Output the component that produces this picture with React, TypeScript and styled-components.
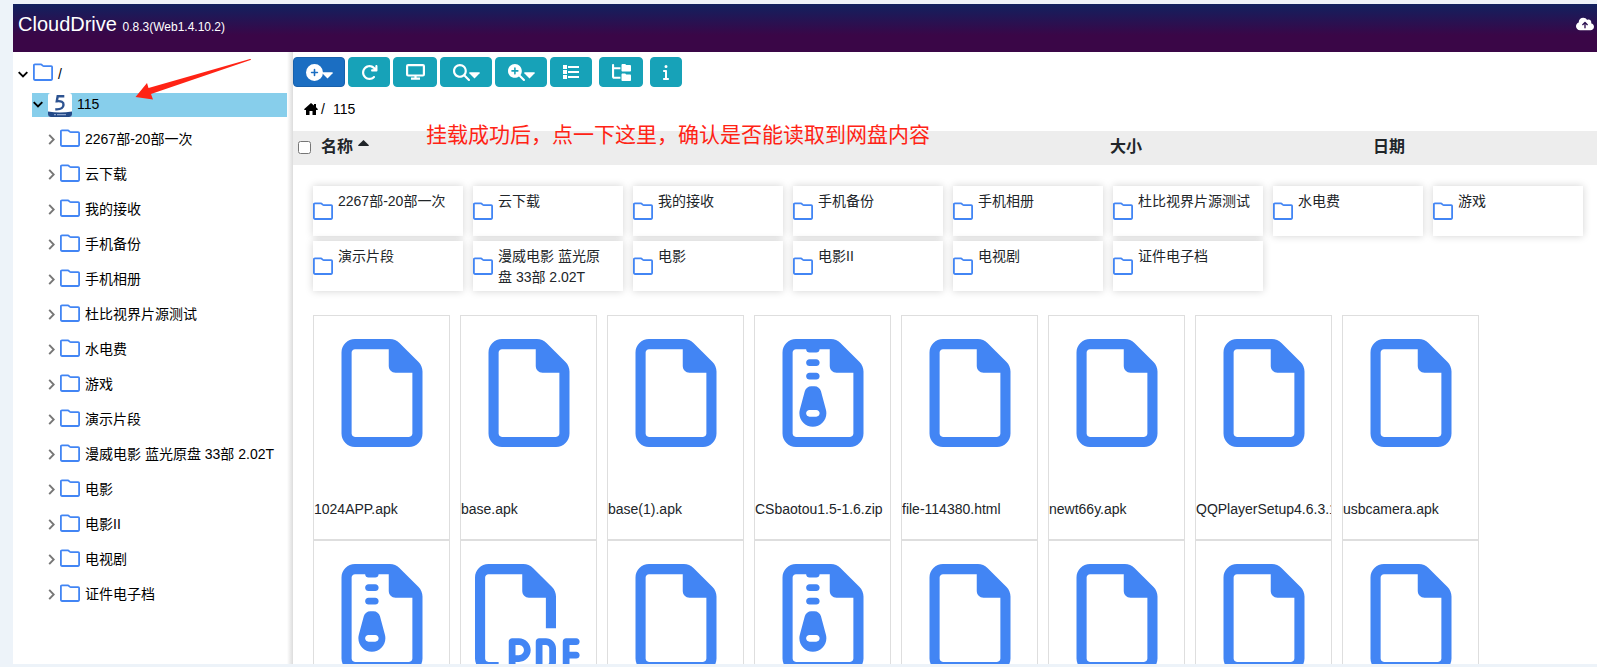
import React from "react";
import styled, { createGlobalStyle, css } from "styled-components";
import {
  FaArrowRotateRight,
  FaCirclePlus,
  FaCloudArrowUp,
  FaFolderTree,
  FaInfo,
  FaMagnifyingGlass,
  FaMagnifyingGlassPlus,
  FaRegFile,
  FaRegFilePdf,
  FaRegFileZipper,
} from "react-icons/fa6";

const GlobalStyle = createGlobalStyle`
  *, *::before, *::after { box-sizing: border-box; }
  body {
    margin: 0;
    background: #edf3f9;
    color: #212529;
    font-family: "Liberation Sans", "Noto Sans CJK SC", sans-serif;
    font-size: 14px;
    line-height: 21px;
  }
  button { font: inherit; color: inherit; cursor: pointer; }
  svg { display: block; flex: none; }
`;

const Page = styled.div`
  position: relative;
  display: flex;
  flex-direction: column;
  height: 100vh;
  padding: 4px 0 3px 13px;
  overflow: hidden;
`;

const Header = styled.header`
  display: flex;
  flex: none;
  align-items: flex-start;
  justify-content: space-between;
  height: 48px;
  padding: 8px 3px 0 5px;
  color: #fff;
  background: linear-gradient(180deg, #11215f 0%, #3a0647 65%);
`;

const Brand = styled.h1`
  margin: 0;
  font-size: 20px;
  font-weight: 400;
  line-height: 24px;

  small { font-size: 12px; }
`;

const IconButton = styled.button`
  display: flex;
  padding: 3px 0;
  border: 0;
  background: none;
`;

const Body = styled.div`
  display: flex;
  flex: 1;
  min-height: 0;
  background: #fff;
`;

const Sidebar = styled.nav`
  flex: none;
  width: 274px;
  padding: 8px 0;
  color: #000;
`;

const Splitter = styled.div`
  flex: none;
  width: 6px;
  background: linear-gradient(90deg, #fff, #dcdcdc);
`;

const indent = [0, 19, 15];

const TreeList = styled.ul<{ $level: number }>`
  margin: 0;
  padding: 0 0 0 ${(p) => indent[p.$level]}px;
  list-style: none;
`;

const TreeRow = styled.button<{ $kind: "root" | "drive" | "folder" }>`
  display: flex;
  align-items: center;
  width: 100%;
  padding: 0;
  border: 0;
  background: none;
  text-align: left;
  white-space: nowrap;
  gap: 5px;
  ${(p) =>
    p.$kind === "root" &&
    css`
      height: 28px;
      margin-bottom: 5px;
      padding-left: 5px;
    `}
  ${(p) =>
    p.$kind === "drive" &&
    css`
      height: 24px;
      margin-bottom: 5px;
      padding: 0 0 2px 1px;
      background: skyblue;

      svg + svg { margin-top: 2px; }
    `}
  ${(p) =>
    p.$kind === "folder" &&
    css`
      height: 35px;
    `}
`;

const TreeIcon = styled.span`
  padding-bottom: 4px;
`;

const Content = styled.main`
  flex: 1;
  min-width: 0;
  overflow: hidden;
`;

const Toolbar = styled.div`
  display: flex;
  gap: 7px;
  padding-top: 5px;
`;

const ToolGroup = styled.div`
  display: flex;
  gap: 3px;
`;

const ToolButton = styled.button<{ $primary?: boolean; $width: number }>`
  display: flex;
  align-items: center;
  justify-content: center;
  width: ${(p) => p.$width}px;
  height: 30px;
  padding: 0;
  border: 1px solid ${(p) => (p.$primary ? "#1861ac" : "#17a2b8")};
  border-radius: 4px;
  color: #fff;
  background: ${(p) => (p.$primary ? "#1b6ec2" : "#17a2b8")};
`;

const DropMark = styled.span`
  margin: 6px 0 0 -1px;
`;

const Breadcrumb = styled.nav`
  display: flex;
  align-items: center;
  gap: 3px;
  height: 44px;
  padding-left: 11px;
  color: #000;

  a { display: flex; color: inherit; text-decoration: none; }
  a:last-child { margin-left: 5px; }
`;

const ListHead = styled.div`
  display: grid;
  grid-template-columns: 817fr 263fr 224fr;
  align-items: center;
  height: 34px;
  padding-bottom: 2px;
  background: #ededed;
`;

const HeadCell = styled.div`
  display: flex;
  align-items: center;
`;

const CheckBox = styled.input`
  width: 13px;
  height: 13px;
  margin: 0 10px 0 5px;
`;

const SortButton = styled.button`
  display: flex;
  gap: 5px;
  padding: 0;
  border: 0;
  background: none;
  font-size: 16px;
  font-weight: 700;
  line-height: 24px;

  svg { margin-top: 5px; }
`;

const FolderGrid = styled.div`
  display: flex;
  flex-wrap: wrap;
  gap: 5px 10px;
  padding: 21px 0 0 20px;
`;

const FolderCard = styled.button`
  display: flex;
  align-items: center;
  gap: 5px;
  width: 150px;
  height: 50px;
  padding: 0 10px 0 0;
  border: 0;
  background: #fff;
  box-shadow: 0 0 8px rgba(0, 0, 0, 0.18);
  text-align: left;

  span { align-self: flex-start; padding-top: 5px; }
`;

const FileGrid = styled.div`
  display: flex;
  flex-wrap: wrap;
  column-gap: 10px;
  padding: 24px 0 0 20px;
`;

const FileCard = styled.figure`
  display: flex;
  flex-direction: column;
  width: 137px;
  height: 225px;
  margin: 0;
  padding-top: 23px;
  border: 1px solid #dedede;
  overflow: hidden;
`;

const FileArt = styled.div`
  display: flex;
  justify-content: center;
  height: 160px;
  color: #4285f4;

  svg { width: auto; height: 108px; }
`;

const FileName = styled.figcaption`
  overflow: hidden;
  white-space: nowrap;
`;

const Note = styled.p`
  position: absolute;
  top: 119px;
  left: 426px;
  margin: 0;
  color: #ff2315;
  font-family: "Noto Sans CJK SC", sans-serif;
  font-size: 21px;
  line-height: 28px;
  white-space: nowrap;
`;

const Arrow = styled.svg`
  position: absolute;
  top: 58px;
  left: 135px;
  pointer-events: none;
`;

const FolderIcon = () => (
  <svg width="20" height="18" viewBox="0 0 20 18" fill="none" stroke="#4285f4" strokeWidth="1.8" strokeLinejoin="round" aria-hidden="true">
    <path d="M1.9 1.4H7.800Q8.600 1.400 9.200 2.200T10.800 3.200H18.200q.9 0 .9.900V16.100q0 .9-.9.900H1.900q-1 0-1-.9V2.300q0-.9 1-.9Z" />
  </svg>
);

const ChevronDown = () => (
  <svg width="10" height="11" viewBox="0 0 10 11" fill="none" stroke="#000" strokeWidth="1.9" aria-hidden="true">
    <path d="m.7 3.200 4.300 4.300 4.300-4.300" />
  </svg>
);

const ChevronRight = () => (
  <svg width="8" height="11" viewBox="0 0 8 11" fill="none" stroke="#777" strokeWidth="1.9" aria-hidden="true">
    <path d="m2.200.8 4.500 4.700-4.500 4.700" />
  </svg>
);

const Triangle = ({ up = false }: { up?: boolean }) => (
  <svg width="11" height="7" viewBox="0 0 11 7" fill="currentColor" aria-hidden="true">
    <path d={up ? "M5.500 0 10.700 5q.6 1-.5 1H.8q-1.100 0-.5-1Z" : "M5.500 6.500.3 1.200Q-.3.300.8.300h9.400q1.100 0 .5.900Z"} />
  </svg>
);

const Drop = () => (
  <DropMark>
    <Triangle />
  </DropMark>
);

const DriveLogo = () => (
  <svg width="24" height="24" viewBox="0 0 24 24" aria-hidden="true">
    <rect width="24" height="24" rx="3" fill="#fff" />
    <path d="M0 18.500q12 2 24 0V21a3 3 0 0 1-3 3H3a3 3 0 0 1-3-3Z" fill="#234a88" />
    <path d="M6 21.700h2M9 21.700h9" stroke="#8ba4cc" strokeWidth="1.2" />
    <path d="M16.300 3.200H9.700L8.800 8.200C13 7.700 15.800 9 15.500 12 15.200 15.300 12 16.600 7.300 16.300" fill="none" stroke="#2d5391" strokeWidth="2.4" />
  </svg>
);

const MonitorIcon = () => (
  <svg width="19" height="16" viewBox="0 0 19 16" fill="none" stroke="currentColor" strokeWidth="2.2" aria-hidden="true">
    <rect x="1.1" y="1.1" width="16.8" height="10.4" rx="1" />
    <path d="M9.500 11.500V15M5 14.700h9" />
  </svg>
);

const ListIcon = () => (
  <svg width="16" height="14" viewBox="0 0 16 14" fill="currentColor" aria-hidden="true">
    <path d="M0 0h4v4H0zM0 5h4v4H0zM0 10h4v4H0zM5 1h11v2H5zM5 6h11v2H5zM5 11h11v2H5z" />
  </svg>
);

const HomeIcon = () => (
  <svg width="14" height="12" viewBox="0 0 14 12" fill="currentColor" aria-hidden="true">
    <path d="M7 0 10 2.500V1h2v3.300l2 1.900-.7.800H12v5H8.500V8h-3v4H2V7H.7L0 6.200Z" />
  </svg>
);

const folders = [
  "2267部-20部一次",
  "云下载",
  "我的接收",
  "手机备份",
  "手机相册",
  "杜比视界片源测试",
  "水电费",
  "游戏",
  "演示片段",
  "漫威电影 蓝光原盘 33部 2.02T",
  "电影",
  "电影II",
  "电视剧",
  "证件电子档",
];

type FileKind = "file" | "zip" | "pdf";

const fileIcons = { file: FaRegFile, zip: FaRegFileZipper, pdf: FaRegFilePdf };

const files: { name: string; kind: FileKind }[] = [
  { name: "1024APP.apk", kind: "file" },
  { name: "base.apk", kind: "file" },
  { name: "base(1).apk", kind: "file" },
  { name: "CSbaotou1.5-1.6.zip", kind: "zip" },
  { name: "file-114380.html", kind: "file" },
  { name: "newt66y.apk", kind: "file" },
  { name: "QQPlayerSetup4.6.3.1", kind: "file" },
  { name: "usbcamera.apk", kind: "file" },
  { name: "", kind: "zip" },
  { name: "", kind: "pdf" },
  { name: "", kind: "file" },
  { name: "", kind: "zip" },
  { name: "", kind: "file" },
  { name: "", kind: "file" },
  { name: "", kind: "file" },
  { name: "", kind: "file" },
];

export default function App() {
  return (
    <Page>
      <GlobalStyle />
      <Header>
        <Brand>
          CloudDrive <small>0.8.3(Web1.4.10.2)</small>
        </Brand>
        <IconButton aria-label="Upload">
          <FaCloudArrowUp size={18} />
        </IconButton>
      </Header>
      <Body>
        <Sidebar aria-label="Folders">
          <TreeList $level={0}>
            <li>
              <TreeRow $kind="root">
                <ChevronDown />
                <TreeIcon><FolderIcon /></TreeIcon>/
              </TreeRow>
              <TreeList $level={1}>
                <li>
                  <TreeRow $kind="drive">
                    <ChevronDown />
                    <DriveLogo />
                    115
                  </TreeRow>
                  <TreeList $level={2}>
                    {folders.map((name) => (
                      <li key={name}>
                        <TreeRow $kind="folder">
                          <ChevronRight />
                          <TreeIcon><FolderIcon /></TreeIcon>
                          {name}
                        </TreeRow>
                      </li>
                    ))}
                  </TreeList>
                </li>
              </TreeList>
            </li>
          </TreeList>
        </Sidebar>
        <Splitter />
        <Content>
          <Toolbar>
            <ToolGroup>
              <ToolButton $primary $width={52} aria-label="Add">
                <FaCirclePlus size={17} />
                <Drop />
              </ToolButton>
              <ToolButton $width={42} aria-label="Refresh"><FaArrowRotateRight size={17} /></ToolButton>
              <ToolButton $width={44} aria-label="Display"><MonitorIcon /></ToolButton>
              <ToolButton $width={52} aria-label="Search">
                <FaMagnifyingGlass size={17} />
                <Drop />
              </ToolButton>
              <ToolButton $width={52} aria-label="Zoom">
                <FaMagnifyingGlassPlus size={17} />
                <Drop />
              </ToolButton>
              <ToolButton $width={42} aria-label="List view"><ListIcon /></ToolButton>
            </ToolGroup>
            <ToolButton $width={44} aria-label="Folder tree"><FaFolderTree size={19} /></ToolButton>
            <ToolButton $width={32} aria-label="Information"><FaInfo size={16} /></ToolButton>
          </Toolbar>
          <Breadcrumb aria-label="Path">
            <a href="#home" aria-label="Home"><HomeIcon /></a>
            <span>/</span>
            <a href="#115">115</a>
          </Breadcrumb>
          <ListHead>
            <HeadCell>
              <CheckBox type="checkbox" aria-label="全选" />
              <SortButton>
                名称
                <Triangle up />
              </SortButton>
            </HeadCell>
            <HeadCell><SortButton>大小</SortButton></HeadCell>
            <HeadCell><SortButton>日期</SortButton></HeadCell>
          </ListHead>
          <FolderGrid>
            {folders.map((name) => (
              <FolderCard key={name}>
                <FolderIcon />
                <span>{name}</span>
              </FolderCard>
            ))}
          </FolderGrid>
          <FileGrid>
            {files.map(({ name, kind }, i) => {
              const Icon = fileIcons[kind];
              return (
                <FileCard key={i}>
                  <FileArt><Icon /></FileArt>
                  <FileName>{name}</FileName>
                </FileCard>
              );
            })}
          </FileGrid>
        </Content>
      </Body>
      <Note>挂载成功后，点一下这里，确认是否能读取到网盘内容</Note>
      <Arrow width="118" height="44" viewBox="0 0 118 44" fill="#ff2315" aria-hidden="true">
        <path d="M.5 39 12 25l1.500 5L115 1q2 0 .5 1L16 36l2 5.500Z" />
      </Arrow>
    </Page>
  );
}
